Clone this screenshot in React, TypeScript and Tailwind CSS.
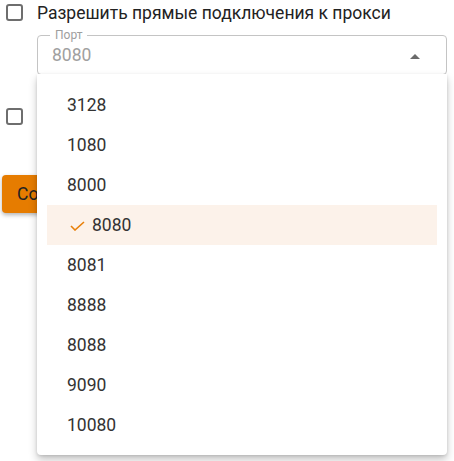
import React from "react";

const ports = ["3128", "1080", "8000", "8080", "8081", "8888", "8088", "9090", "10080"];

function Box() {
  return <div className="w-[17px] h-[17px] border-2 border-[#6e6e6e] rounded-[3px] bg-white shrink-0" />;
}

export default function App() {
  return (
    <div className="relative w-[454px] h-[461px] bg-white overflow-hidden" style={{ fontFamily: "Roboto, 'Noto Sans', sans-serif" }}>
      <div className="flex flex-col">
        <div className="flex items-center h-[25px] pl-[6px] gap-[14px]">
          <Box />
          <span className="text-[17.5px] text-[#222] leading-[24px]">Разрешить прямые подключения к прокси</span>
        </div>
        <div className="relative ml-[37px] mr-[7px] mt-[10px] h-[40px] border border-[#c4c4c4] rounded-[4px] flex items-center pl-[14px] pr-[26px]">
          <span className="absolute left-[12px] top-[-8px] px-[5px] bg-white text-[12px] leading-[14px] text-[#9e9e9e]">Порт</span>
          <span className="text-[17.5px] text-[#a0a0a0] flex-1 mt-[1px]">8080</span>
          <svg width="10" height="5" viewBox="0 0 10 5" className="mt-[2px]">
            <polygon points="0,5 5,0 10,5" fill="#6b6b6b" />
          </svg>
        </div>
        <div className="flex items-center h-[25px] pl-[6px] gap-[14px] mt-[29px]">
          <Box />
          <span className="text-[17.5px] text-[#222] leading-[24px]">Использовать прокси</span>
        </div>
        <div className="mt-[46px] ml-[2px]">
          <button className="h-[38px] px-[15px] rounded-[4px] bg-[#e67c00] text-[17.5px] text-[#222] shadow-[0_2px_4px_rgba(0,0,0,0.3)]">
            Сохранить
          </button>
        </div>
      </div>

      <div className="absolute left-[37px] top-[74px] w-[410px] bg-white rounded-b-[4px] pt-[11px] pb-[10px] shadow-[0_5px_8px_rgba(0,0,0,0.22),0_1px_3px_rgba(0,0,0,0.12)]">
        {ports.map((p) => {
          const sel = p === "8080";
          return (
            <div
              key={p}
              className={
                sel
                  ? "mx-[10px] h-[40px] flex items-center pl-[23px] bg-[#fcf2ea] text-[17.5px] text-[#333]"
                  : "mx-[10px] h-[40px] flex items-center pl-[20px] text-[17.5px] text-[#333]"
              }
            >
              {sel && (
                <svg width="15" height="10" viewBox="0 0 15 10" className="mr-[7px] mt-[1px]">
                  <polyline points="1,5 5,9 14,1" fill="none" stroke="#e8800a" strokeWidth="1.6" />
                </svg>
              )}
              {p}
            </div>
          );
        })}
      </div>
    </div>
  );
}
